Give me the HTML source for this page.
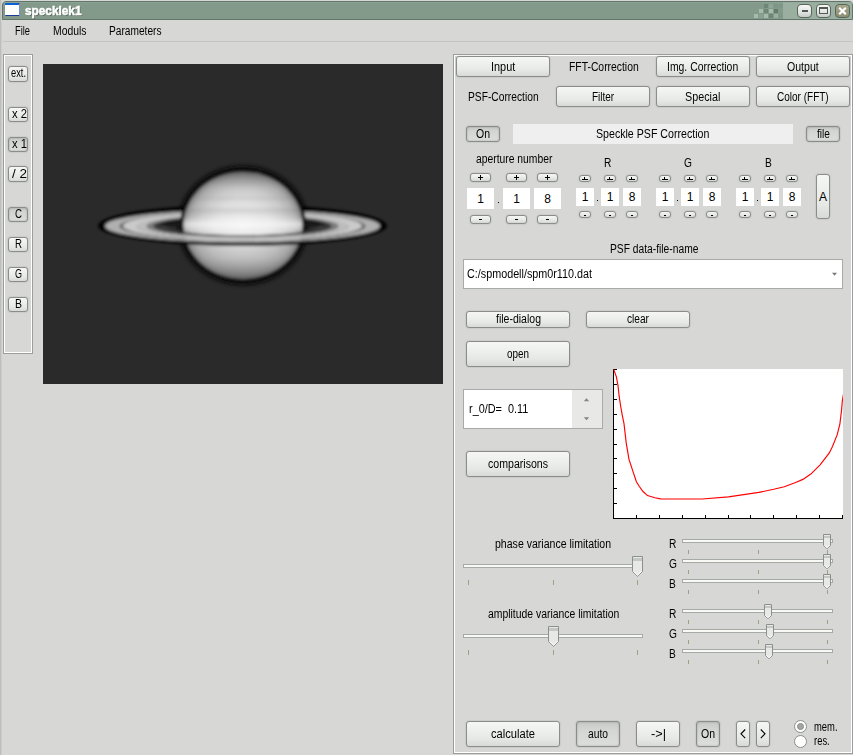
<!DOCTYPE html>
<html><head><meta charset="utf-8">
<style>
*{margin:0;padding:0;box-sizing:border-box}
html,body{width:853px;height:755px;overflow:hidden;background:#d7d7d5;font-family:"Liberation Sans",sans-serif;font-size:12px;color:#000}
.a{position:absolute}
.t{position:absolute;white-space:nowrap;transform-origin:0 0}
.btn{position:absolute;border:1px solid #8a8d8a;border-radius:3px;background:linear-gradient(#f6f7f5 0%,#eef0ee 35%,#e6e8e6 70%,#d8dad8 100%);box-shadow:0 0 1.5px rgba(0,0,0,.28)}
.prs{position:absolute;border:1px solid #8a8d8a;border-radius:3px;background:linear-gradient(#c8cac8 0%,#d4d6d4 35%,#dcdedc 100%);box-shadow:inset 0 0 2px rgba(0,0,0,.25),0 0 1.5px rgba(0,0,0,.28)}
.sb{position:absolute;border:1px solid #8a8d8a;border-radius:3px;background:linear-gradient(#f6f7f5,#e6e8e6 60%,#d4d6d4);box-shadow:0 0 1.5px rgba(0,0,0,.28)}
.track{position:absolute;height:4px;border:1px solid #a6aaa6;background:#f8f8f4}
.tick{position:absolute;width:1px;background:#a0a086}
</style></head><body>
<div class="a" style="left:0px;top:0px;width:1px;height:755px;background:#bebebc"></div>
<div class="a" style="left:1px;top:0px;width:1px;height:755px;background:#cdcdcb"></div>
<div class="a" style="left:2px;top:1px;width:851px;height:19px;background:#839989;border:1px solid #60766a;border-radius:4px 4px 0 0"></div>
<div class="a" style="left:783px;top:2px;width:69px;height:17px;background:#9bafa1;border-top-right-radius:3px"></div>
<div class="a" style="left:3px;top:2px;width:849px;height:1px;background:#93aa9b;opacity:.6"></div>
<div class="a" style="left:764px;top:4px;width:4px;height:4px;background:#6d8777"></div>
<div class="a" style="left:769px;top:4px;width:4px;height:4px;background:#8ea696"></div>
<div class="a" style="left:774px;top:4px;width:4px;height:4px;background:#7e9686"></div>
<div class="a" style="left:779px;top:4px;width:4px;height:4px;background:#7e9686"></div>
<div class="a" style="left:759px;top:9px;width:4px;height:4px;background:#a6baad"></div>
<div class="a" style="left:764px;top:9px;width:4px;height:4px;background:#6d8777"></div>
<div class="a" style="left:769px;top:9px;width:4px;height:4px;background:#a6baad"></div>
<div class="a" style="left:774px;top:9px;width:4px;height:4px;background:#637b6b"></div>
<div class="a" style="left:754px;top:14px;width:4px;height:4px;background:#a6baad"></div>
<div class="a" style="left:759px;top:14px;width:4px;height:4px;background:#8aa292"></div>
<div class="a" style="left:764px;top:14px;width:4px;height:4px;background:#a6baad"></div>
<div class="a" style="left:769px;top:14px;width:4px;height:4px;background:#6d8777"></div>
<div class="a" style="left:774px;top:14px;width:4px;height:4px;background:#9bafa1"></div>
<div class="a" style="left:779px;top:14px;width:4px;height:4px;background:#7e9686"></div>
<div class="a" style="left:5px;top:3px;width:15px;height:13px;background:#fffffc;border-right:1px solid #6a92e0;border-top:2px solid #0a62d6;border-bottom:1px solid #1a3c98;border-radius:1px"></div>
<div class="a" style="left:17.5px;top:3.5px;width:1.6px;height:1.6px;background:#f01010;border-radius:50%"></div>
<div class="t" style="left:25px;top:4.14px;font-size:12px;line-height:14.399999999999999px;color:#fff;transform:scaleX(0.9850);font-weight:bold;text-shadow:1px 1px 0 #566b5d;-webkit-text-stroke:0.5px #fff">specklek1</div>
<div class="a" style="left:797px;top:4px;width:15px;height:14px;border:1px solid #56685c;border-radius:4px;background:linear-gradient(#f8f8f6,#e2e4e2 60%,#c8cac8)"></div>
<div class="a" style="left:816px;top:4px;width:15px;height:14px;border:1px solid #56685c;border-radius:4px;background:linear-gradient(#f8f8f6,#e2e4e2 60%,#c8cac8)"></div>
<div class="a" style="left:802px;top:10px;width:6px;height:2px;background:#4e5a52"></div>
<div class="a" style="left:819px;top:7px;width:9px;height:7px;border:1px solid #4e5a52;border-top-width:2px"></div>
<div class="a" style="left:835px;top:4px;width:15px;height:14px;border:1px solid #56685c;border-radius:4px;background:linear-gradient(#a8a88e,#8e8e74)"></div>
<svg class="a" style="left:835px;top:4px" width="15" height="14"><path d="M4.2 3.7L10.8 10.3M10.8 3.7L4.2 10.3" stroke="#fff" stroke-width="2.2"/></svg>
<div class="t" style="left:15px;top:23.64px;font-size:12px;line-height:14.399999999999999px;color:#000;transform:scaleX(0.7754);">File</div>
<div class="t" style="left:52.5px;top:23.64px;font-size:12px;line-height:14.399999999999999px;color:#000;transform:scaleX(0.8659);">Moduls</div>
<div class="t" style="left:108.6px;top:23.64px;font-size:12px;line-height:14.399999999999999px;color:#000;transform:scaleX(0.8466);">Parameters</div>
<div class="a" style="left:3px;top:41px;width:850px;height:1px;background:#c4c4c2"></div>
<div class="a" style="left:3px;top:54px;width:30px;height:300px;border:1px solid #9a9f9a"></div>
<div class="a" style="left:4px;top:55px;width:28px;height:298px;border:1px solid #fff"></div>
<div class="btn" style="left:8px;top:66px;width:20px;height:16px"></div>
<div class="t" style="left:10.5px;top:66.44px;font-size:12px;line-height:14.399999999999999px;color:#000;transform:scaleX(0.7761);">ext.</div>
<div class="btn" style="left:8px;top:107px;width:20px;height:15px"></div>
<div class="t" style="left:12px;top:107.14px;font-size:12px;line-height:14.399999999999999px;color:#000;transform:scaleX(0.9375);">x 2</div>
<div class="prs" style="left:8px;top:137px;width:20px;height:15px"></div>
<div class="t" style="left:12px;top:137.14px;font-size:12px;line-height:14.399999999999999px;color:#000;transform:scaleX(0.9375);">x 1</div>
<div class="btn" style="left:8px;top:166px;width:20px;height:16px"></div>
<div class="t" style="left:12px;top:167.14px;font-size:12px;line-height:14.399999999999999px;color:#000;transform:scaleX(1.1254);">/ 2</div>
<div class="prs" style="left:8px;top:207px;width:20px;height:15px"></div>
<div class="t" style="left:14.5px;top:206.94px;font-size:12px;line-height:14.399999999999999px;color:#000;transform:scaleX(0.8072);">C</div>
<div class="btn" style="left:8px;top:237px;width:20px;height:15px"></div>
<div class="t" style="left:14.5px;top:236.94px;font-size:12px;line-height:14.399999999999999px;color:#000;transform:scaleX(0.8072);">R</div>
<div class="btn" style="left:8px;top:267px;width:20px;height:15px"></div>
<div class="t" style="left:14.5px;top:266.94px;font-size:12px;line-height:14.399999999999999px;color:#000;transform:scaleX(0.7504);">G</div>
<div class="btn" style="left:8px;top:297px;width:20px;height:15px"></div>
<div class="t" style="left:14.5px;top:296.94px;font-size:12px;line-height:14.399999999999999px;color:#000;transform:scaleX(0.8750);">B</div>
<div class="a" style="left:43px;top:64px;width:400px;height:320px"><svg width="400" height="320" viewBox="0 0 400 320" style="display:block">
<defs>
<filter id="bl" x="-20%" y="-50%" width="140%" height="200%"><feGaussianBlur stdDeviation="1.7"/></filter>
<filter id="bl3" x="-30%" y="-30%" width="160%" height="160%"><feGaussianBlur stdDeviation="2.6"/></filter>
<radialGradient id="pg" cx="0.5" cy="0.5" r="0.5">
<stop offset="0" stop-color="#ececec"/><stop offset="0.45" stop-color="#dedede"/><stop offset="0.7" stop-color="#c8c8c8"/><stop offset="0.88" stop-color="#acacac"/><stop offset="0.97" stop-color="#888888"/><stop offset="1" stop-color="#686868"/>
</radialGradient>
<linearGradient id="bands" x1="0" y1="0" x2="0" y2="1">
<stop offset="0" stop-color="#505050" stop-opacity="0.6"/>
<stop offset="0.1" stop-color="#808080" stop-opacity="0.3"/>
<stop offset="0.2" stop-color="#d0d0d0" stop-opacity="0"/>
<stop offset="0.25" stop-color="#909090" stop-opacity="0.15"/>
<stop offset="0.3" stop-color="#ffffff" stop-opacity="0.05"/>
<stop offset="0.36" stop-color="#909090" stop-opacity="0.22"/>
<stop offset="0.42" stop-color="#ffffff" stop-opacity="0.15"/>
<stop offset="0.49" stop-color="#ffffff" stop-opacity="0.65"/>
<stop offset="0.57" stop-color="#ffffff" stop-opacity="0.2"/>
<stop offset="0.66" stop-color="#a0a0a0" stop-opacity="0.15"/>
<stop offset="0.8" stop-color="#909090" stop-opacity="0.25"/>
<stop offset="1" stop-color="#505050" stop-opacity="0.6"/>
</linearGradient>
<clipPath id="back"><rect x="0" y="0" width="400" height="162.0"/></clipPath>
</defs>
<rect width="400" height="320" fill="#2a2a2a"/>
<ellipse cx="200" cy="161.4" rx="65" ry="59.5" fill="#0a0a0a" filter="url(#bl3)"/>
<g filter="url(#bl)">
<g clip-path="url(#back)"><ellipse cx="199.5" cy="162.0" rx="144.5" ry="21.39" fill="#040404"/><ellipse cx="199.5" cy="162.0" rx="137.5" ry="16.36" fill="#b0b0b0"/><ellipse cx="199.5" cy="162.0" rx="123" ry="14.64" fill="#646464"/><ellipse cx="199.5" cy="162.0" rx="119.5" ry="14.22" fill="#cacaca"/><ellipse cx="199.5" cy="162.0" rx="106" ry="12.61" fill="#bdbdbd"/><ellipse cx="199.5" cy="162.0" rx="96" ry="11.42" fill="#7a7a7a"/><ellipse cx="199.5" cy="162.0" rx="89" ry="10.59" fill="#383838"/><ellipse cx="199.5" cy="162.0" rx="83" ry="9.88" fill="#121212"/></g>
<ellipse cx="200" cy="161.4" rx="63" ry="57" fill="#080808"/>
<ellipse cx="200" cy="161.4" rx="59.5" ry="53.5" fill="url(#pg)"/>
<ellipse cx="200" cy="161.4" rx="59.5" ry="53.5" fill="url(#bands)"/>
<path d="M116.50 162.0 A83 9.88 0 0 0 282.50 162.0 L276.50 162.0 A77 9.16 0 0 1 122.50 162.0 Z" fill="#404040"/>
<path d="M55.00 162.0 A144.5 19.80 0 0 0 344.00 162.0 L337.00 162.0 A137.5 16.36 0 0 1 62.00 162.0 Z" fill="#040404"/><path d="M62.00 162.0 A137.5 16.36 0 0 0 337.00 162.0 L322.50 162.0 A123 14.64 0 0 1 76.50 162.0 Z" fill="#b0b0b0"/><path d="M76.50 162.0 A123 14.64 0 0 0 322.50 162.0 L319.00 162.0 A119.5 14.22 0 0 1 80.00 162.0 Z" fill="#646464"/><path d="M80.00 162.0 A119.5 14.22 0 0 0 319.00 162.0 L305.50 162.0 A106 12.61 0 0 1 93.50 162.0 Z" fill="#cacaca"/><path d="M93.50 162.0 A106 12.61 0 0 0 305.50 162.0 L295.50 162.0 A96 11.42 0 0 1 103.50 162.0 Z" fill="#bdbdbd"/><path d="M103.50 162.0 A96 11.42 0 0 0 295.50 162.0 L288.50 162.0 A89 10.59 0 0 1 110.50 162.0 Z" fill="#7a7a7a"/><path d="M110.50 162.0 A89 10.59 0 0 0 288.50 162.0 L282.50 162.0 A83 9.88 0 0 1 116.50 162.0 Z" fill="#383838"/>
</g>
</svg></div>
<div class="a" style="left:453px;top:54px;width:400px;height:700px;border:1px solid #9a9f9a"></div>
<div class="a" style="left:454px;top:55px;width:398px;height:698px;border:1px solid #fff"></div>
<div class="btn" style="left:456px;top:56px;width:94px;height:21px"></div>
<div class="t" style="left:490.9px;top:59.64px;font-size:12px;line-height:14.399999999999999px;color:#000;transform:scaleX(0.9073);">Input</div>
<div class="t" style="left:568.7px;top:59.64px;font-size:12px;line-height:14.399999999999999px;color:#000;transform:scaleX(0.8638);">FFT-Correction</div>
<div class="btn" style="left:656px;top:56px;width:94px;height:21px"></div>
<div class="t" style="left:667.4px;top:59.64px;font-size:12px;line-height:14.399999999999999px;color:#000;transform:scaleX(0.8681);">Img. Correction</div>
<div class="btn" style="left:756px;top:56px;width:94px;height:21px"></div>
<div class="t" style="left:787.15px;top:59.64px;font-size:12px;line-height:14.399999999999999px;color:#000;transform:scaleX(0.8806);">Output</div>
<div class="t" style="left:468.4px;top:89.64px;font-size:12px;line-height:14.399999999999999px;color:#000;transform:scaleX(0.8538);">PSF-Correction</div>
<div class="btn" style="left:556px;top:86px;width:94px;height:21px"></div>
<div class="t" style="left:591.9px;top:89.64px;font-size:12px;line-height:14.399999999999999px;color:#000;transform:scaleX(0.8323);">Filter</div>
<div class="btn" style="left:656px;top:86px;width:94px;height:21px"></div>
<div class="t" style="left:685.35px;top:89.64px;font-size:12px;line-height:14.399999999999999px;color:#000;transform:scaleX(0.8969);">Special</div>
<div class="btn" style="left:756px;top:86px;width:94px;height:21px"></div>
<div class="t" style="left:777.15px;top:89.64px;font-size:12px;line-height:14.399999999999999px;color:#000;transform:scaleX(0.8339);">Color (FFT)</div>
<div class="prs" style="left:466px;top:126px;width:34px;height:16px"></div>
<div class="t" style="left:476.0px;top:127.14px;font-size:12px;line-height:14.399999999999999px;color:#000;transform:scaleX(0.8750);">On</div>
<div class="a" style="left:513px;top:124px;width:280px;height:20px;background:#efefef"></div>
<div class="t" style="left:596.35px;top:126.64px;font-size:12px;line-height:14.399999999999999px;color:#000;transform:scaleX(0.8849);">Speckle PSF Correction</div>
<div class="prs" style="left:806px;top:126px;width:34px;height:16px"></div>
<div class="t" style="left:816.5px;top:127.14px;font-size:12px;line-height:14.399999999999999px;color:#000;transform:scaleX(0.8473);">file</div>
<div class="t" style="left:476px;top:151.64px;font-size:12px;line-height:14.399999999999999px;color:#000;transform:scaleX(0.8602);">aperture number</div>
<div class="sb" style="left:470px;top:173px;width:21px;height:9px"></div>
<div class="a" style="left:478px;top:177px;width:5px;height:1px;background:#000"></div>
<div class="a" style="left:480px;top:175px;width:1px;height:5px;background:#000"></div>
<div class="sb" style="left:470px;top:215px;width:21px;height:9px"></div>
<div class="a" style="left:479px;top:219px;width:3px;height:1px;background:#000"></div>
<div class="sb" style="left:506px;top:173px;width:21px;height:9px"></div>
<div class="a" style="left:514px;top:177px;width:5px;height:1px;background:#000"></div>
<div class="a" style="left:516px;top:175px;width:1px;height:5px;background:#000"></div>
<div class="sb" style="left:506px;top:215px;width:21px;height:9px"></div>
<div class="a" style="left:515px;top:219px;width:3px;height:1px;background:#000"></div>
<div class="sb" style="left:537px;top:173px;width:21px;height:9px"></div>
<div class="a" style="left:545px;top:177px;width:5px;height:1px;background:#000"></div>
<div class="a" style="left:547px;top:175px;width:1px;height:5px;background:#000"></div>
<div class="sb" style="left:537px;top:215px;width:21px;height:9px"></div>
<div class="a" style="left:546px;top:219px;width:3px;height:1px;background:#000"></div>
<div class="a" style="left:467px;top:188px;width:27px;height:21px;background:#fff"></div>
<div class="t" style="left:477.16px;top:191.64px;font-size:12px;line-height:14.399999999999999px;color:#000;transform:scaleX(1.0000);">1</div>
<div class="a" style="left:503px;top:188px;width:27px;height:21px;background:#fff"></div>
<div class="t" style="left:513.16px;top:191.64px;font-size:12px;line-height:14.399999999999999px;color:#000;transform:scaleX(1.0000);">1</div>
<div class="a" style="left:534px;top:188px;width:27px;height:21px;background:#fff"></div>
<div class="t" style="left:544.16px;top:191.64px;font-size:12px;line-height:14.399999999999999px;color:#000;transform:scaleX(1.0000);">8</div>
<div class="a" style="left:498px;top:202px;width:1px;height:1px;background:#000"></div>
<div class="t" style="left:604.31px;top:155.64px;font-size:12px;line-height:14.399999999999999px;color:#000;transform:scaleX(0.8500);">R</div>
<div class="sb" style="left:579px;top:175px;width:12px;height:7px"></div>
<div class="a" style="left:582px;top:179px;width:6px;height:1px;background:#000"></div>
<div class="a" style="left:584px;top:177px;width:1px;height:2px;background:#000"></div>
<div class="sb" style="left:579px;top:211px;width:12px;height:7px"></div>
<div class="a" style="left:584px;top:215px;width:2px;height:1px;background:#000"></div>
<div class="sb" style="left:604px;top:175px;width:12px;height:7px"></div>
<div class="a" style="left:607px;top:179px;width:6px;height:1px;background:#000"></div>
<div class="a" style="left:609px;top:177px;width:1px;height:2px;background:#000"></div>
<div class="sb" style="left:604px;top:211px;width:12px;height:7px"></div>
<div class="a" style="left:609px;top:215px;width:2px;height:1px;background:#000"></div>
<div class="sb" style="left:626px;top:175px;width:12px;height:7px"></div>
<div class="a" style="left:629px;top:179px;width:6px;height:1px;background:#000"></div>
<div class="a" style="left:631px;top:177px;width:1px;height:2px;background:#000"></div>
<div class="sb" style="left:626px;top:211px;width:12px;height:7px"></div>
<div class="a" style="left:631px;top:215px;width:2px;height:1px;background:#000"></div>
<div class="a" style="left:576px;top:188px;width:18px;height:18px;background:#fff"></div>
<div class="t" style="left:581.66px;top:189.64px;font-size:12px;line-height:14.399999999999999px;color:#000;transform:scaleX(1.0000);">1</div>
<div class="a" style="left:601px;top:188px;width:18px;height:18px;background:#fff"></div>
<div class="t" style="left:606.66px;top:189.64px;font-size:12px;line-height:14.399999999999999px;color:#000;transform:scaleX(1.0000);">1</div>
<div class="a" style="left:623px;top:188px;width:18px;height:18px;background:#fff"></div>
<div class="t" style="left:628.66px;top:189.64px;font-size:12px;line-height:14.399999999999999px;color:#000;transform:scaleX(1.0000);">8</div>
<div class="a" style="left:597px;top:200px;width:1px;height:1px;background:#000"></div>
<div class="t" style="left:684.04px;top:155.64px;font-size:12px;line-height:14.399999999999999px;color:#000;transform:scaleX(0.8500);">G</div>
<div class="sb" style="left:659px;top:175px;width:12px;height:7px"></div>
<div class="a" style="left:662px;top:179px;width:6px;height:1px;background:#000"></div>
<div class="a" style="left:664px;top:177px;width:1px;height:2px;background:#000"></div>
<div class="sb" style="left:659px;top:211px;width:12px;height:7px"></div>
<div class="a" style="left:664px;top:215px;width:2px;height:1px;background:#000"></div>
<div class="sb" style="left:684px;top:175px;width:12px;height:7px"></div>
<div class="a" style="left:687px;top:179px;width:6px;height:1px;background:#000"></div>
<div class="a" style="left:689px;top:177px;width:1px;height:2px;background:#000"></div>
<div class="sb" style="left:684px;top:211px;width:12px;height:7px"></div>
<div class="a" style="left:689px;top:215px;width:2px;height:1px;background:#000"></div>
<div class="sb" style="left:706px;top:175px;width:12px;height:7px"></div>
<div class="a" style="left:709px;top:179px;width:6px;height:1px;background:#000"></div>
<div class="a" style="left:711px;top:177px;width:1px;height:2px;background:#000"></div>
<div class="sb" style="left:706px;top:211px;width:12px;height:7px"></div>
<div class="a" style="left:711px;top:215px;width:2px;height:1px;background:#000"></div>
<div class="a" style="left:656px;top:188px;width:18px;height:18px;background:#fff"></div>
<div class="t" style="left:661.66px;top:189.64px;font-size:12px;line-height:14.399999999999999px;color:#000;transform:scaleX(1.0000);">1</div>
<div class="a" style="left:681px;top:188px;width:18px;height:18px;background:#fff"></div>
<div class="t" style="left:686.66px;top:189.64px;font-size:12px;line-height:14.399999999999999px;color:#000;transform:scaleX(1.0000);">1</div>
<div class="a" style="left:703px;top:188px;width:18px;height:18px;background:#fff"></div>
<div class="t" style="left:708.66px;top:189.64px;font-size:12px;line-height:14.399999999999999px;color:#000;transform:scaleX(1.0000);">8</div>
<div class="a" style="left:677px;top:200px;width:1px;height:1px;background:#000"></div>
<div class="t" style="left:764.6px;top:155.64px;font-size:12px;line-height:14.399999999999999px;color:#000;transform:scaleX(0.8500);">B</div>
<div class="sb" style="left:739px;top:175px;width:12px;height:7px"></div>
<div class="a" style="left:742px;top:179px;width:6px;height:1px;background:#000"></div>
<div class="a" style="left:744px;top:177px;width:1px;height:2px;background:#000"></div>
<div class="sb" style="left:739px;top:211px;width:12px;height:7px"></div>
<div class="a" style="left:744px;top:215px;width:2px;height:1px;background:#000"></div>
<div class="sb" style="left:764px;top:175px;width:12px;height:7px"></div>
<div class="a" style="left:767px;top:179px;width:6px;height:1px;background:#000"></div>
<div class="a" style="left:769px;top:177px;width:1px;height:2px;background:#000"></div>
<div class="sb" style="left:764px;top:211px;width:12px;height:7px"></div>
<div class="a" style="left:769px;top:215px;width:2px;height:1px;background:#000"></div>
<div class="sb" style="left:786px;top:175px;width:12px;height:7px"></div>
<div class="a" style="left:789px;top:179px;width:6px;height:1px;background:#000"></div>
<div class="a" style="left:791px;top:177px;width:1px;height:2px;background:#000"></div>
<div class="sb" style="left:786px;top:211px;width:12px;height:7px"></div>
<div class="a" style="left:791px;top:215px;width:2px;height:1px;background:#000"></div>
<div class="a" style="left:736px;top:188px;width:18px;height:18px;background:#fff"></div>
<div class="t" style="left:741.66px;top:189.64px;font-size:12px;line-height:14.399999999999999px;color:#000;transform:scaleX(1.0000);">1</div>
<div class="a" style="left:761px;top:188px;width:18px;height:18px;background:#fff"></div>
<div class="t" style="left:766.66px;top:189.64px;font-size:12px;line-height:14.399999999999999px;color:#000;transform:scaleX(1.0000);">1</div>
<div class="a" style="left:783px;top:188px;width:18px;height:18px;background:#fff"></div>
<div class="t" style="left:788.66px;top:189.64px;font-size:12px;line-height:14.399999999999999px;color:#000;transform:scaleX(1.0000);">8</div>
<div class="a" style="left:757px;top:200px;width:1px;height:1px;background:#000"></div>
<div class="btn" style="left:816px;top:174px;width:14px;height:45px"></div>
<div class="t" style="left:819.0px;top:189.64px;font-size:12px;line-height:14.399999999999999px;color:#000;transform:scaleX(1.0000);">A</div>
<div class="t" style="left:609.5px;top:241.64px;font-size:12px;line-height:14.399999999999999px;color:#000;transform:scaleX(0.8553);">PSF data-file-name</div>
<div class="a" style="left:463px;top:259px;width:380px;height:30px;background:#fff;border:1px solid #a8aca8"></div>
<div class="t" style="left:467.4px;top:266.64px;font-size:12px;line-height:14.399999999999999px;color:#000;transform:scaleX(0.8983);">C:/spmodell/spm0r110.dat</div>
<svg class="a" style="left:831px;top:272px" width="7" height="5"><path d="M1 0.8H6L3.5 3.8Z" fill="#7a7a7a"/></svg>
<div class="btn" style="left:466px;top:311px;width:104px;height:17px"></div>
<div class="t" style="left:495.5px;top:312.14px;font-size:12px;line-height:14.399999999999999px;color:#000;transform:scaleX(0.8759);">file-dialog</div>
<div class="btn" style="left:586px;top:311px;width:104px;height:17px"></div>
<div class="t" style="left:627.0px;top:312.14px;font-size:12px;line-height:14.399999999999999px;color:#000;transform:scaleX(0.8456);">clear</div>
<div class="btn" style="left:466px;top:341px;width:104px;height:26px"></div>
<div class="t" style="left:507.0px;top:346.64px;font-size:12px;line-height:14.399999999999999px;color:#000;transform:scaleX(0.8244);">open</div>
<div class="a" style="left:463px;top:389px;width:140px;height:40px;background:#fff;border:1px solid #a8aca8"></div>
<div class="a" style="left:572px;top:390px;width:30px;height:38px;background:#e8e8e6"></div>
<div class="t" style="left:469.3px;top:401.64px;font-size:12px;line-height:14.399999999999999px;color:#000;transform:scaleX(0.9073);white-space:pre">r_0/D=  0.11</div>
<svg class="a" style="left:583px;top:398px" width="7" height="4"><path d="M0.8 3.2H6.2L3.5 0.3Z" fill="#858585"/></svg>
<svg class="a" style="left:583px;top:417px" width="7" height="4"><path d="M0.8 0.3H6.2L3.5 3.2Z" fill="#858585"/></svg>
<div class="btn" style="left:466px;top:451px;width:104px;height:26px"></div>
<div class="t" style="left:488.0px;top:456.64px;font-size:12px;line-height:14.399999999999999px;color:#000;transform:scaleX(0.8819);">comparisons</div>
<svg class="a" style="left:613px;top:369px" width="230" height="150"><rect width="230" height="150" fill="#fff"/><rect x="0" y="0" width="1" height="150" fill="#000"/><rect x="0" y="149" width="230" height="1" fill="#000"/><rect x="0" y="0" width="4" height="1" fill="#000"/><rect x="0" y="15" width="4" height="1" fill="#000"/><rect x="0" y="30" width="4" height="1" fill="#000"/><rect x="0" y="45" width="4" height="1" fill="#000"/><rect x="0" y="60" width="4" height="1" fill="#000"/><rect x="0" y="75" width="4" height="1" fill="#000"/><rect x="0" y="89" width="4" height="1" fill="#000"/><rect x="0" y="104" width="4" height="1" fill="#000"/><rect x="0" y="119" width="4" height="1" fill="#000"/><rect x="0" y="134" width="4" height="1" fill="#000"/><rect x="23" y="146" width="1" height="3" fill="#000"/><rect x="46" y="146" width="1" height="3" fill="#000"/><rect x="69" y="146" width="1" height="3" fill="#000"/><rect x="92" y="146" width="1" height="3" fill="#000"/><rect x="115" y="146" width="1" height="3" fill="#000"/><rect x="137" y="146" width="1" height="3" fill="#000"/><rect x="160" y="146" width="1" height="3" fill="#000"/><rect x="183" y="146" width="1" height="3" fill="#000"/><rect x="206" y="146" width="1" height="3" fill="#000"/><rect x="229" y="146" width="1" height="3" fill="#000"/><polyline points="0.7,0.4 3.4,7.9 5.0,16.6 6.2,27.7 7.8,38.0 9.4,46.8 11.0,54.7 13.2,73.8 16.0,90.4 19.7,101.6 23.4,112.7 26.2,117.3 30.0,122.5 34.5,126.6 41.9,128.8 47.5,129.9 89.2,130.0 115.5,127.9 145.8,123.4 160.7,120.3 171.3,117.7 181.9,113.7 189.9,110.4 197.8,105.1 207.1,95.8 216.3,83.9 219.6,77.3 224.3,65.4 226.9,54.8 228.5,41.6 229.3,32.3 230.4,25.4" fill="none" stroke="#f00" stroke-width="1.15"/></svg>
<div class="t" style="left:495.3px;top:537.14px;font-size:12px;line-height:14.399999999999999px;color:#000;transform:scaleX(0.8791);">phase variance limitation</div>
<div class="track" style="left:463px;top:564px;width:180px"></div>
<div class="tick" style="left:468px;top:580px;height:5px"></div>
<div class="tick" style="left:553px;top:580px;height:5px"></div>
<div class="tick" style="left:637px;top:580px;height:5px"></div>
<svg class="a" style="left:632px;top:556px" width="12" height="21"><path d="M0.5 0.5H10.5V15.5L5.5 20.3L0.5 15.5Z" fill="#e8e8e6" stroke="#8a918a"/><rect x="1" y="2" width="9" height="3" fill="#c4c8c4"/><path d="M1.5 15.5L5.5 19L9.5 15.5" fill="none" stroke="#fff"/></svg>
<div class="t" style="left:487.8px;top:607.14px;font-size:12px;line-height:14.399999999999999px;color:#000;transform:scaleX(0.8672);">amplitude variance limitation</div>
<div class="track" style="left:463px;top:634px;width:180px"></div>
<div class="tick" style="left:468px;top:650px;height:5px"></div>
<div class="tick" style="left:553px;top:650px;height:5px"></div>
<div class="tick" style="left:637px;top:650px;height:5px"></div>
<svg class="a" style="left:548px;top:626px" width="12" height="21"><path d="M0.5 0.5H10.5V15.5L5.5 20.3L0.5 15.5Z" fill="#e8e8e6" stroke="#8a918a"/><rect x="1" y="2" width="9" height="3" fill="#c4c8c4"/><path d="M1.5 15.5L5.5 19L9.5 15.5" fill="none" stroke="#fff"/></svg>
<div class="t" style="left:668.7px;top:536.94px;font-size:12px;line-height:14.399999999999999px;color:#000;transform:scaleX(0.8500);">R</div>
<div class="track" style="left:682px;top:539px;width:151px"></div>
<div class="tick" style="left:688px;top:550px;height:4px"></div>
<div class="tick" style="left:758px;top:550px;height:4px"></div>
<div class="tick" style="left:827px;top:550px;height:4px"></div>
<svg class="a" style="left:823px;top:534px" width="9" height="15"><path d="M0.5 0.5H7.5V11.5L4 14.6L0.5 11.5Z" fill="#e8e8e6" stroke="#8a918a"/><rect x="1" y="2" width="6" height="2" fill="#c4c8c4"/><path d="M1.5 11.5L4 13.6L6.5 11.5" fill="none" stroke="#fff"/></svg>
<div class="t" style="left:668.7px;top:556.94px;font-size:12px;line-height:14.399999999999999px;color:#000;transform:scaleX(0.8500);">G</div>
<div class="track" style="left:682px;top:559px;width:151px"></div>
<div class="tick" style="left:688px;top:570px;height:4px"></div>
<div class="tick" style="left:758px;top:570px;height:4px"></div>
<div class="tick" style="left:827px;top:570px;height:4px"></div>
<svg class="a" style="left:823px;top:554px" width="9" height="15"><path d="M0.5 0.5H7.5V11.5L4 14.6L0.5 11.5Z" fill="#e8e8e6" stroke="#8a918a"/><rect x="1" y="2" width="6" height="2" fill="#c4c8c4"/><path d="M1.5 11.5L4 13.6L6.5 11.5" fill="none" stroke="#fff"/></svg>
<div class="t" style="left:668.7px;top:576.94px;font-size:12px;line-height:14.399999999999999px;color:#000;transform:scaleX(0.8500);">B</div>
<div class="track" style="left:682px;top:579px;width:151px"></div>
<div class="tick" style="left:688px;top:590px;height:4px"></div>
<div class="tick" style="left:758px;top:590px;height:4px"></div>
<div class="tick" style="left:827px;top:590px;height:4px"></div>
<svg class="a" style="left:823px;top:574px" width="9" height="15"><path d="M0.5 0.5H7.5V11.5L4 14.6L0.5 11.5Z" fill="#e8e8e6" stroke="#8a918a"/><rect x="1" y="2" width="6" height="2" fill="#c4c8c4"/><path d="M1.5 11.5L4 13.6L6.5 11.5" fill="none" stroke="#fff"/></svg>
<div class="t" style="left:668.7px;top:606.94px;font-size:12px;line-height:14.399999999999999px;color:#000;transform:scaleX(0.8500);">R</div>
<div class="track" style="left:682px;top:609px;width:151px"></div>
<div class="tick" style="left:688px;top:620px;height:4px"></div>
<div class="tick" style="left:758px;top:620px;height:4px"></div>
<div class="tick" style="left:827px;top:620px;height:4px"></div>
<svg class="a" style="left:764px;top:604px" width="9" height="15"><path d="M0.5 0.5H7.5V11.5L4 14.6L0.5 11.5Z" fill="#e8e8e6" stroke="#8a918a"/><rect x="1" y="2" width="6" height="2" fill="#c4c8c4"/><path d="M1.5 11.5L4 13.6L6.5 11.5" fill="none" stroke="#fff"/></svg>
<div class="t" style="left:668.7px;top:626.94px;font-size:12px;line-height:14.399999999999999px;color:#000;transform:scaleX(0.8500);">G</div>
<div class="track" style="left:682px;top:629px;width:151px"></div>
<div class="tick" style="left:688px;top:640px;height:4px"></div>
<div class="tick" style="left:758px;top:640px;height:4px"></div>
<div class="tick" style="left:827px;top:640px;height:4px"></div>
<svg class="a" style="left:766px;top:624px" width="9" height="15"><path d="M0.5 0.5H7.5V11.5L4 14.6L0.5 11.5Z" fill="#e8e8e6" stroke="#8a918a"/><rect x="1" y="2" width="6" height="2" fill="#c4c8c4"/><path d="M1.5 11.5L4 13.6L6.5 11.5" fill="none" stroke="#fff"/></svg>
<div class="t" style="left:668.7px;top:646.94px;font-size:12px;line-height:14.399999999999999px;color:#000;transform:scaleX(0.8500);">B</div>
<div class="track" style="left:682px;top:649px;width:151px"></div>
<div class="tick" style="left:688px;top:660px;height:4px"></div>
<div class="tick" style="left:758px;top:660px;height:4px"></div>
<div class="tick" style="left:827px;top:660px;height:4px"></div>
<svg class="a" style="left:765px;top:644px" width="9" height="15"><path d="M0.5 0.5H7.5V11.5L4 14.6L0.5 11.5Z" fill="#e8e8e6" stroke="#8a918a"/><rect x="1" y="2" width="6" height="2" fill="#c4c8c4"/><path d="M1.5 11.5L4 13.6L6.5 11.5" fill="none" stroke="#fff"/></svg>
<div class="btn" style="left:466px;top:721px;width:94px;height:26px"></div>
<div class="t" style="left:491.0px;top:726.64px;font-size:12px;line-height:14.399999999999999px;color:#000;transform:scaleX(0.9291);">calculate</div>
<div class="prs" style="left:576px;top:721px;width:44px;height:26px"></div>
<div class="t" style="left:588.0px;top:726.64px;font-size:12px;line-height:14.399999999999999px;color:#000;transform:scaleX(0.8568);">auto</div>
<div class="btn" style="left:636px;top:721px;width:44px;height:26px"></div>
<div class="t" style="left:650.5px;top:726.64px;font-size:12px;line-height:14.399999999999999px;color:#000;transform:scaleX(1.0608);">-&gt;|</div>
<div class="prs" style="left:696px;top:721px;width:24px;height:26px"></div>
<div class="t" style="left:701.0px;top:726.64px;font-size:12px;line-height:14.399999999999999px;color:#000;transform:scaleX(0.8750);">On</div>
<div class="btn" style="left:736px;top:721px;width:14px;height:26px"></div>
<svg class="a" style="left:736px;top:721px" width="14" height="26"><path d="M9.2 8.5L5 12.8L9.2 17.1" fill="none" stroke="#000" stroke-width="1.1"/></svg>
<div class="btn" style="left:756px;top:721px;width:14px;height:26px"></div>
<svg class="a" style="left:756px;top:721px" width="14" height="26"><path d="M4.8 8.5L9 12.8L4.8 17.1" fill="none" stroke="#000" stroke-width="1.1"/></svg>
<div class="a" style="left:794px;top:720px;width:13px;height:13px;border-radius:50%;background:#fff;border:1px solid #8a918a"><div class="a" style="left:2px;top:2px;width:7px;height:7px;border-radius:50%;background:#a4a6a4;border:1px solid #888c88"></div></div>
<div class="a" style="left:794px;top:735px;width:13px;height:13px;border-radius:50%;background:#fff;border:1px solid #8a918a"></div>
<div class="t" style="left:813.8px;top:719.64px;font-size:12px;line-height:14.399999999999999px;color:#000;transform:scaleX(0.7833);">mem.</div>
<div class="t" style="left:813.8px;top:734.34px;font-size:12px;line-height:14.399999999999999px;color:#000;transform:scaleX(0.7850);">res.</div>
</body></html>
